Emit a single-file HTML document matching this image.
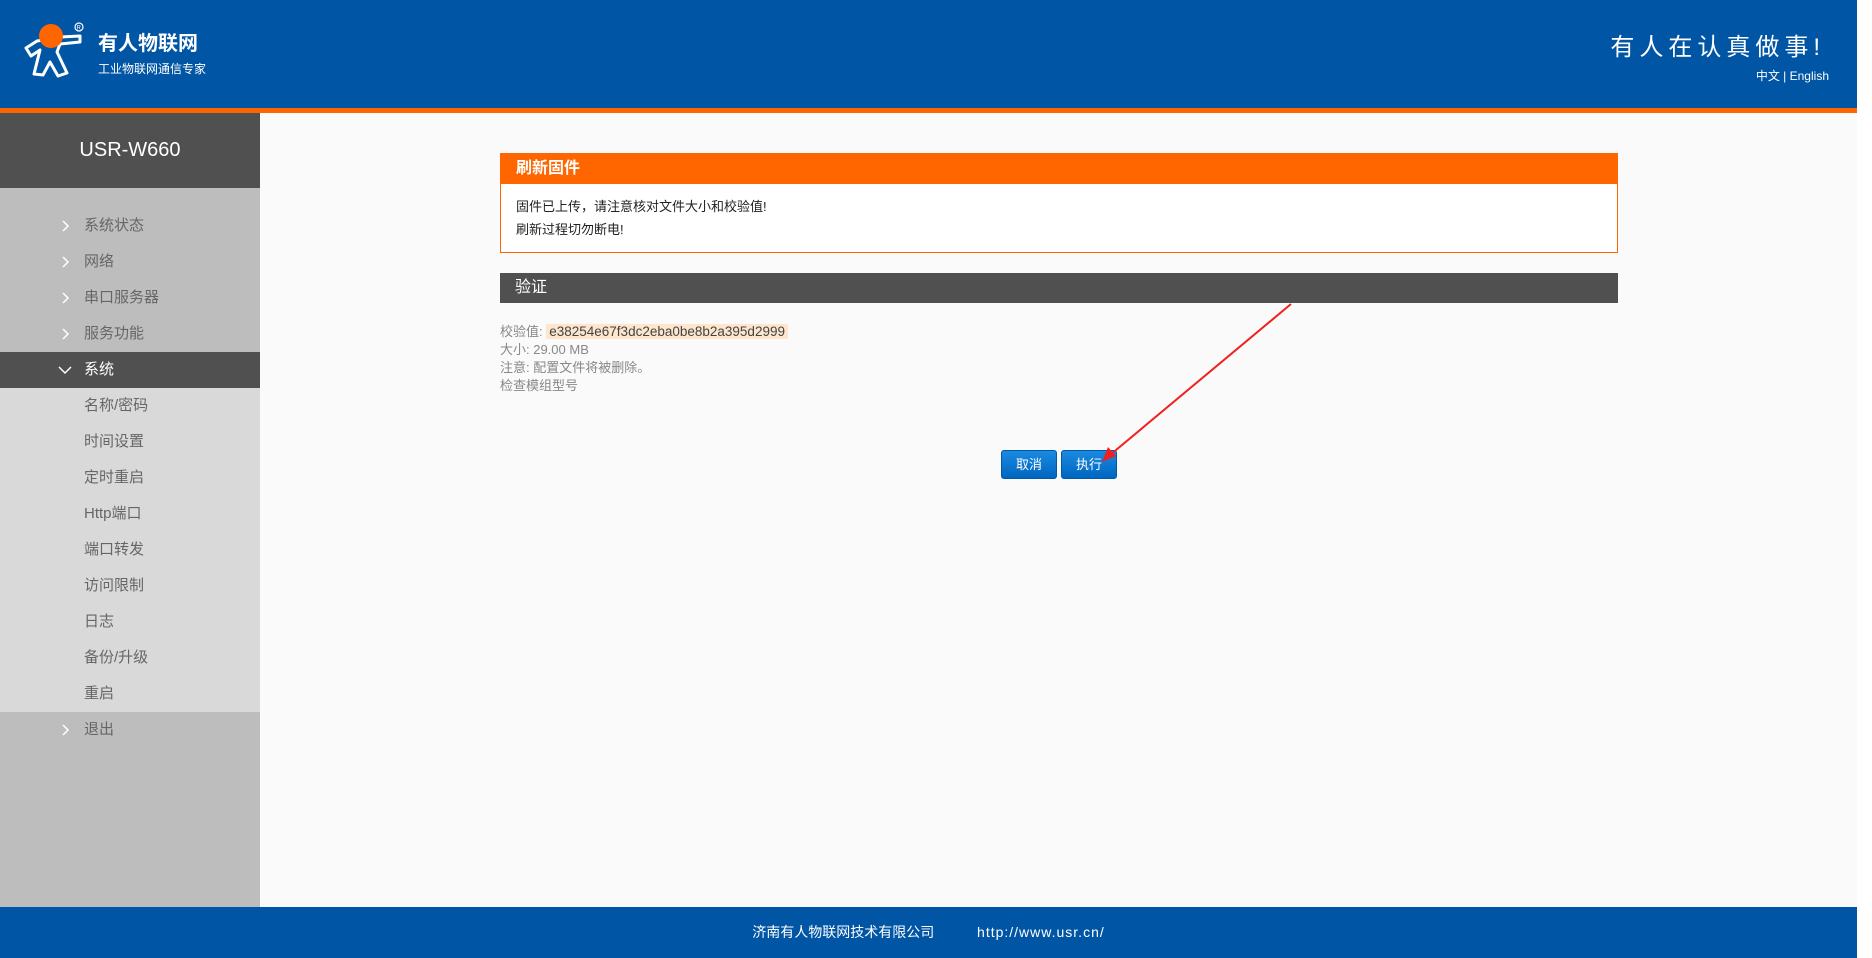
<!DOCTYPE html>
<html><head><meta charset="utf-8"><style>
*{margin:0;padding:0;box-sizing:border-box}
body{width:1872px;height:958px;background:#fafafa;font-family:"Liberation Sans","Noto Sans CJK SC",sans-serif;position:relative;overflow:hidden}
.hdr{position:absolute;left:0;top:0;width:1857px;height:108px;background:#0055a5}
.ol{position:absolute;left:0;top:108px;width:1857px;height:5px;background:#ff6600}
.sb{position:absolute;right:0;top:0;width:15px;height:958px;background:#fff}
.side{position:absolute;left:0;top:113px;width:260px;height:794px;background:#bdbdbd}
.st{height:75px;background:#505050;color:#fff;font-size:20px;text-align:center;line-height:75px}
.mi{position:absolute;left:0;width:260px;height:36px;line-height:36px;font-size:15px;color:#666;padding-left:84px}
.mi svg{position:absolute;left:60px;top:12px}
.sub{position:absolute;left:0;top:239px;width:260px;height:360px;background:#d9d9d9}
.foot{position:absolute;left:0;top:907px;width:1857px;height:51px;background:#0055a5;color:#fff;font-size:14px;text-align:center;line-height:51px}
.p1{position:absolute;left:500px;top:153px;width:1118px;height:100px;border:1px solid #ff6600;background:#fff}
.p1 .t{background:#ff6600;height:30px;line-height:30px;color:#fff;font-weight:bold;font-size:16px;padding-left:15px}
.p1 .b{font-size:13px;color:#222;padding:11px 0 0 15px;line-height:23px}
.p2{position:absolute;left:500px;top:273px;width:1118px;height:30px;background:#505050;color:#fff;font-size:16px;line-height:30px;padding-left:15px}
.info{position:absolute;left:500px;top:323px;font-size:13px;color:#888;line-height:18px}
.hash{background:#fde6cc;color:#444;padding:0 3px;border-radius:2px;font-size:13.5px}
.btn{position:absolute;top:450px;width:56px;height:29px;background:linear-gradient(#1a8ae0,#0066c0);border:1px solid #0058a8;border-radius:3px;color:#fff;font-size:13px;text-align:center;line-height:27px}
</style></head><body>
<div class="hdr">
<svg style="position:absolute;left:20px;top:18px" width="66" height="70" viewBox="0 0 66 70">
<circle cx="59" cy="9" r="4" fill="none" stroke="#fff" stroke-width="1.2"/><text x="56.5" y="11.5" font-size="6" fill="#fff">R</text>
<path d="M17 23 L6 30 L11 38 L20 32 L14 56 L23 57 L30 44 L38 58 L47 55 L37 34 L40 26 L60 24 L60 18 L40 19 Z" fill="none" stroke="#fff" stroke-width="3" stroke-linejoin="round"/>
<circle cx="31" cy="18" r="12" fill="#ff6600"/>
</svg>
<div style="position:absolute;left:98px;top:27px;color:#fff;font-weight:bold;font-size:20px">有人物联网</div>
<div style="position:absolute;left:98px;top:60px;color:#fff;font-size:12px">工业物联网通信专家</div>
<div style="position:absolute;right:32px;top:27px;color:#fff;font-size:24px;letter-spacing:5px">有人在认真做事!</div>
<div style="position:absolute;right:28px;top:67px;color:#fff;font-size:12px">中文 | English</div>
</div>
<div class="ol"></div>
<div class="sb"></div>
<div class="side">
<div class="st">USR-W660</div>
<div class="sub"></div>
<div class="mi" style="top:95px"><svg width="10" height="12"><path d="M3 1 L8 6 L3 11" fill="none" stroke="#fff" stroke-width="1.5"/></svg>系统状态</div>
<div class="mi" style="top:131px"><svg width="10" height="12"><path d="M3 1 L8 6 L3 11" fill="none" stroke="#fff" stroke-width="1.5"/></svg>网络</div>
<div class="mi" style="top:167px"><svg width="10" height="12"><path d="M3 1 L8 6 L3 11" fill="none" stroke="#fff" stroke-width="1.5"/></svg>串口服务器</div>
<div class="mi" style="top:203px"><svg width="10" height="12"><path d="M3 1 L8 6 L3 11" fill="none" stroke="#fff" stroke-width="1.5"/></svg>服务功能</div>
<div class="mi" style="top:239px;background:#505050;color:#fff"><svg width="14" height="12" style="left:58px"><path d="M1 3 L7 9 L13 3" fill="none" stroke="#fff" stroke-width="1.5"/></svg>系统</div>
<div class="mi" style="top:275px">名称/密码</div>
<div class="mi" style="top:311px">时间设置</div>
<div class="mi" style="top:347px">定时重启</div>
<div class="mi" style="top:383px">Http端口</div>
<div class="mi" style="top:419px">端口转发</div>
<div class="mi" style="top:455px">访问限制</div>
<div class="mi" style="top:491px">日志</div>
<div class="mi" style="top:527px">备份/升级</div>
<div class="mi" style="top:563px">重启</div>
<div class="mi" style="top:599px"><svg width="10" height="12"><path d="M3 1 L8 6 L3 11" fill="none" stroke="#fff" stroke-width="1.5"/></svg>退出</div>
</div>
<div class="p1"><div class="t">刷新固件</div><div class="b">固件已上传，请注意核对文件大小和校验值!<br>刷新过程切勿断电!</div></div>
<div class="p2">验证</div>
<div class="info">校验值: <span class="hash">e38254e67f3dc2eba0be8b2a395d2999</span><br>大小: 29.00 MB<br>注意: 配置文件将被删除。<br>检查模组型号</div>
<div class="btn" style="left:1001px">取消</div>
<div class="btn" style="left:1061px">执行</div>
<svg style="position:absolute;left:0;top:0" width="1872" height="958"><line x1="1291" y1="304" x2="1110" y2="455" stroke="#f02020" stroke-width="2"/><path d="M1102 462 L1108 447 L1116 456 Z" fill="#f02020"/></svg>
<div class="foot">济南有人物联网技术有限公司 &nbsp; &nbsp; &nbsp; &nbsp; &nbsp; <span style="letter-spacing:1px">http://www.usr.cn/</span></div>
</body></html>
